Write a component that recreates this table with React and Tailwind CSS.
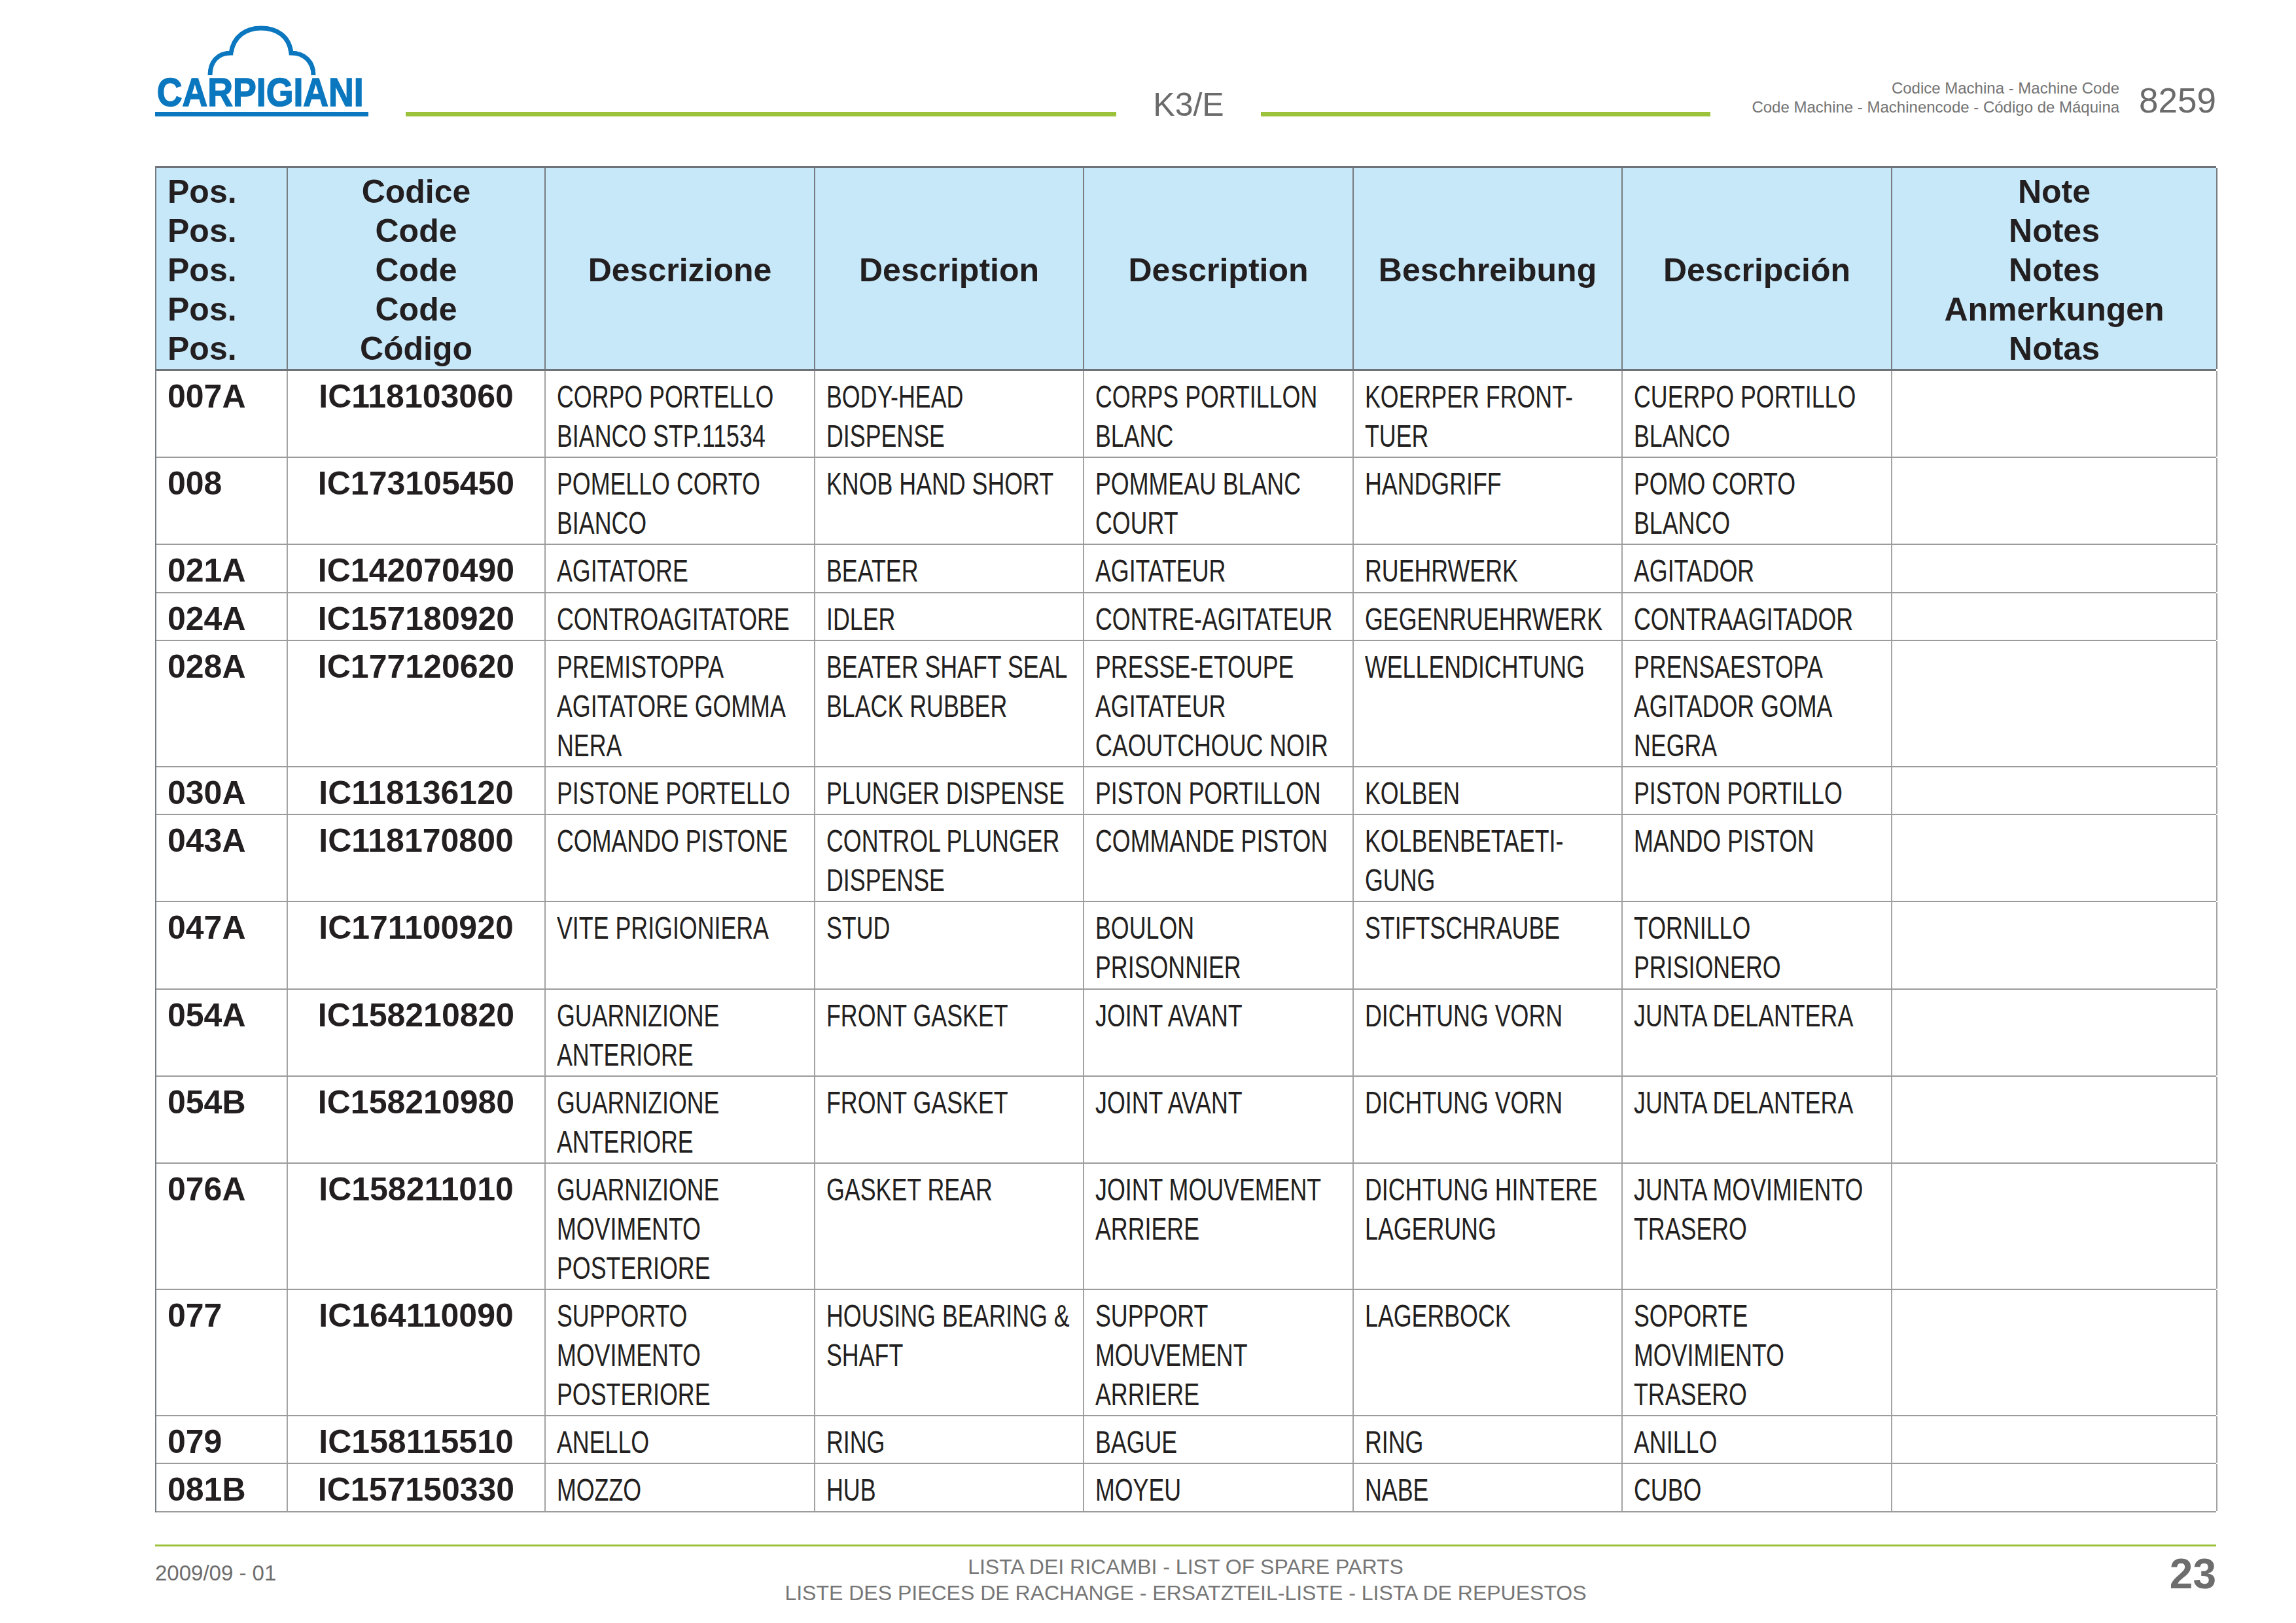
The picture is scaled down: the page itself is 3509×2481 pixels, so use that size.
import React from "react";

const cols =
  "grid grid-cols-[201px_394px_412px_411px_412px_411px_412px_497px]";

const rows = [
  ["007A", "IC118103060", ["CORPO PORTELLO", "BIANCO STP.11534"], ["BODY-HEAD", "DISPENSE"], ["CORPS PORTILLON", "BLANC"], ["KOERPER FRONT-", "TUER"], ["CUERPO PORTILLO", "BLANCO"]],
  ["008", "IC173105450", ["POMELLO CORTO", "BIANCO"], ["KNOB HAND SHORT"], ["POMMEAU BLANC", "COURT"], ["HANDGRIFF"], ["POMO CORTO", "BLANCO"]],
  ["021A", "IC142070490", ["AGITATORE"], ["BEATER"], ["AGITATEUR"], ["RUEHRWERK"], ["AGITADOR"]],
  ["024A", "IC157180920", ["CONTROAGITATORE"], ["IDLER"], ["CONTRE-AGITATEUR"], ["GEGENRUEHRWERK"], ["CONTRAAGITADOR"]],
  ["028A", "IC177120620", ["PREMISTOPPA", "AGITATORE GOMMA", "NERA"], ["BEATER SHAFT SEAL", "BLACK RUBBER"], ["PRESSE-ETOUPE", "AGITATEUR", "CAOUTCHOUC NOIR"], ["WELLENDICHTUNG"], ["PRENSAESTOPA", "AGITADOR GOMA", "NEGRA"]],
  ["030A", "IC118136120", ["PISTONE PORTELLO"], ["PLUNGER DISPENSE"], ["PISTON PORTILLON"], ["KOLBEN"], ["PISTON PORTILLO"]],
  ["043A", "IC118170800", ["COMANDO PISTONE"], ["CONTROL PLUNGER", "DISPENSE"], ["COMMANDE PISTON"], ["KOLBENBETAETI-", "GUNG"], ["MANDO PISTON"]],
  ["047A", "IC171100920", ["VITE PRIGIONIERA"], ["STUD"], ["BOULON", "PRISONNIER"], ["STIFTSCHRAUBE"], ["TORNILLO", "PRISIONERO"]],
  ["054A", "IC158210820", ["GUARNIZIONE", "ANTERIORE"], ["FRONT GASKET"], ["JOINT AVANT"], ["DICHTUNG VORN"], ["JUNTA DELANTERA"]],
  ["054B", "IC158210980", ["GUARNIZIONE", "ANTERIORE"], ["FRONT GASKET"], ["JOINT AVANT"], ["DICHTUNG VORN"], ["JUNTA DELANTERA"]],
  ["076A", "IC158211010", ["GUARNIZIONE", "MOVIMENTO", "POSTERIORE"], ["GASKET REAR"], ["JOINT MOUVEMENT", "ARRIERE"], ["DICHTUNG HINTERE", "LAGERUNG"], ["JUNTA MOVIMIENTO", "TRASERO"]],
  ["077", "IC164110090", ["SUPPORTO", "MOVIMENTO", "POSTERIORE"], ["HOUSING BEARING &", "SHAFT"], ["SUPPORT", "MOUVEMENT", "ARRIERE"], ["LAGERBOCK"], ["SOPORTE", "MOVIMIENTO", "TRASERO"]],
  ["079", "IC158115510", ["ANELLO"], ["RING"], ["BAGUE"], ["RING"], ["ANILLO"]],
  ["081B", "IC157150330", ["MOZZO"], ["HUB"], ["MOYEU"], ["NABE"], ["CUBO"]],
];

// cloud + wordmark, the text stays real text
const Logo = () => (
  <div className="w-[326px] shrink-0 flex flex-col">
    <svg width="326" height="76" viewBox="0 0 326 76" className="block">
      <path
        d="M84 76 C84 56 95 42 116 42 C120 16 139 4 162 4 C186 4 205 16 208 42 C229 42 242 56 242 76"
        fill="none"
        stroke="#0a77bf"
        strokeWidth="7"
      />
    </svg>
    <div className="mt-[-4px] h-[61px] pl-[3px] text-[61px] leading-none font-bold text-[#0a77bf] whitespace-nowrap origin-left scale-x-[0.88] [-webkit-text-stroke:1.5px_#0a77bf]">
      CARPIGIANI
    </div>
    <div className="mt-[-1px] h-[7px] bg-[#0a77bf]" />
  </div>
);

const HeadStack = ({ lines, center }) => (
  <div
    className={
      center
        ? "border-r-2 border-[#777c80] pt-[6px] pb-[1px] text-center"
        : "border-r-2 border-[#777c80] pt-[6px] pb-[1px] pl-[17px]"
    }
  >
    {lines.map((l, i) => (
      <div key={i}>{l}</div>
    ))}
  </div>
);

const HeadLabel = ({ children }) => (
  <div className="border-r-2 border-[#777c80] pt-[6px] pb-[1px] flex items-center justify-center">
    {children}
  </div>
);

const Desc = ({ lines }) => (
  <div className="border-r-2 border-[#a3a3a3] pt-[9px] pb-[2.2px] pl-[17px] text-[49px] font-normal">
    {lines.map((l, i) => (
      <div key={i} className="whitespace-nowrap origin-left scale-x-[0.73]">
        {l}
      </div>
    ))}
  </div>
);

export default function App() {
  return (
    <div className="w-[3509px] h-[2481px] bg-white overflow-hidden pl-[237px] pr-[122px] font-['Liberation_Sans',Arial,sans-serif] text-[#231f20]">
      {/* header */}
      <header className="flex items-end h-[178px]">
        <Logo />
        <div className="ml-[57px] w-[1086px] h-[7px] bg-[#9cc23c] shrink-0" />
        <div className="w-[221px] shrink-0 text-center text-[50px] leading-none mb-[-7px] text-[#6b6b6b]">
          K3/E
        </div>
        <div className="w-[687px] h-[7px] bg-[#9cc23c] shrink-0" />
        <div className="flex-1 flex justify-end items-end">
          <div className="flex flex-col items-end text-[24px] leading-[29px] text-[#737373]">
            <div>Codice Machina - Machine Code</div>
            <div>Code Machine - Machinencode - Código de Máquina</div>
          </div>
          <div className="ml-[30px] text-[53px] leading-none mb-[-2px] text-[#6b6b6b]">8259</div>
        </div>
      </header>

      {/* table */}
      <div className="mt-[76px] border-l-2 border-[#777c80]">
        <div className={cols + " bg-[#c6e8f9] border-t-[3px] border-b-[3px] border-[#6f7377] font-bold text-[50px] leading-[60px]"}>
          <HeadStack lines={["Pos.", "Pos.", "Pos.", "Pos.", "Pos."]} />
          <HeadStack center lines={["Codice", "Code", "Code", "Code", "Código"]} />
          <HeadLabel>Descrizione</HeadLabel>
          <HeadLabel>Description</HeadLabel>
          <HeadLabel>Description</HeadLabel>
          <HeadLabel>Beschreibung</HeadLabel>
          <HeadLabel>Descripción</HeadLabel>
          <HeadStack center lines={["Note", "Notes", "Notes", "Anmerkungen", "Notas"]} />
        </div>

        {rows.map((r) => (
          <div key={r[0] + r[1]} className={cols + " border-b-2 border-[#9b9b9b] leading-[60px]"}>
            <div className="border-r-2 border-[#a3a3a3] pt-[9px] pb-[2.2px] pl-[17px] font-bold text-[50px]">
              {r[0]}
            </div>
            <div className="border-r-2 border-[#a3a3a3] pt-[9px] pb-[2.2px] text-center font-bold text-[50px]">
              {r[1]}
            </div>
            <Desc lines={r[2]} />
            <Desc lines={r[3]} />
            <Desc lines={r[4]} />
            <Desc lines={r[5]} />
            <Desc lines={r[6]} />
            <div className="border-r-2 border-[#a3a3a3]" />
          </div>
        ))}
      </div>

      {/* footer */}
      <div className="mt-[49px] h-[3px] bg-[#9cc23c]" />
      <div className="mt-[10px] grid grid-cols-[1fr_auto_1fr] text-[#6d6d6d]">
        <div className="pt-[11px] text-[33px] leading-[40px]">2009/09 - 01</div>
        <div className="pt-[1px] text-center text-[32px] leading-[40px] text-[#767676]">
          <div>LISTA DEI RICAMBI - LIST OF SPARE PARTS</div>
          <div>LISTE DES PIECES DE RACHANGE - ERSATZTEIL-LISTE - LISTA DE REPUESTOS</div>
        </div>
        <div className="justify-self-end font-bold text-[64px] leading-none">23</div>
      </div>
    </div>
  );
}
